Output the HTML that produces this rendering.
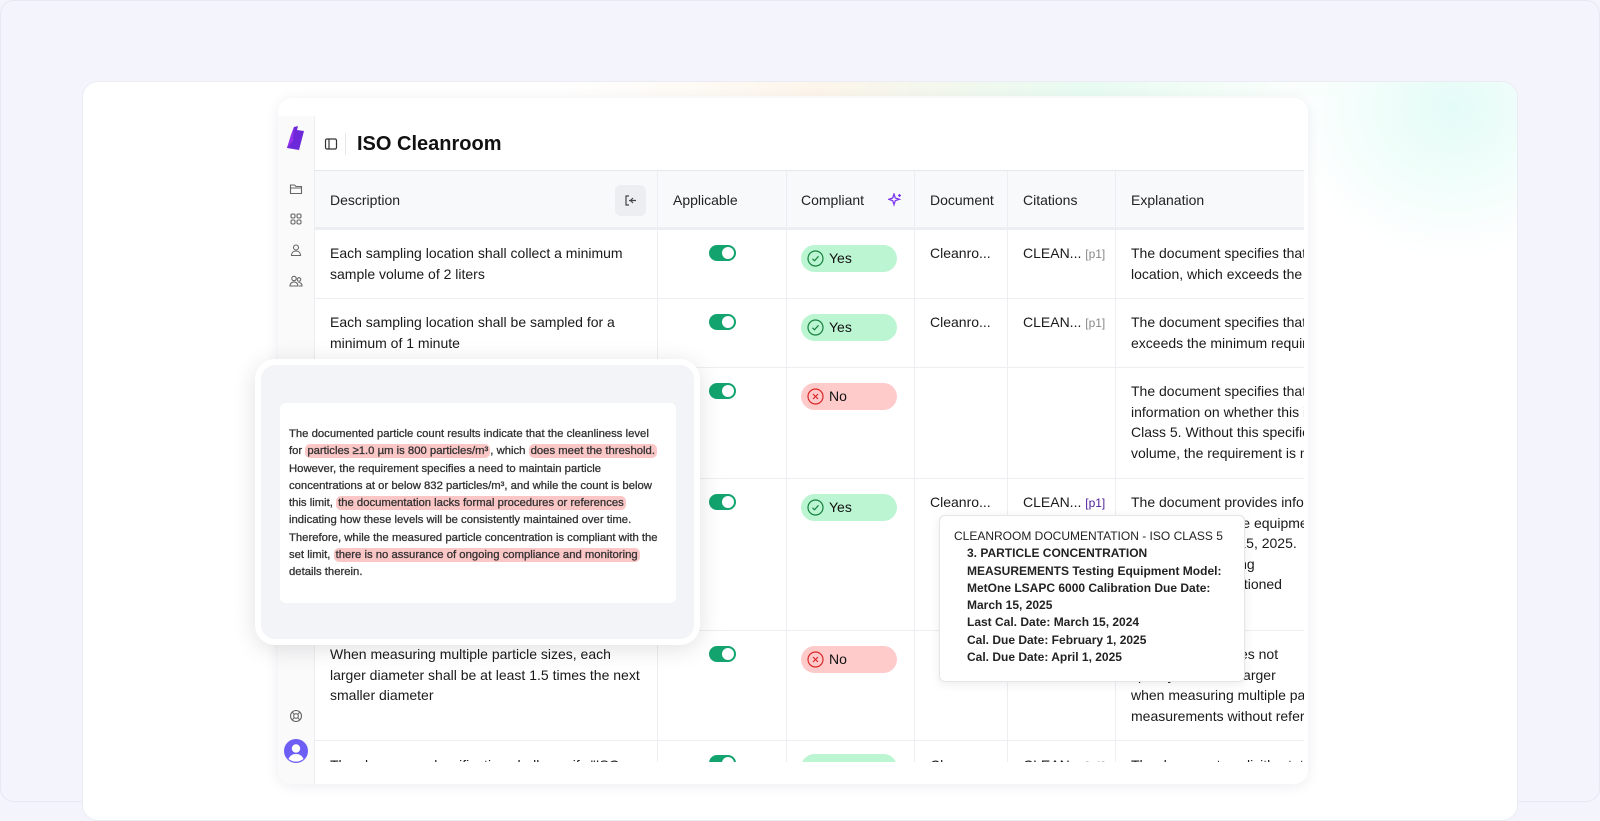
<!DOCTYPE html>
<html><head><meta charset="utf-8"><style>
*{box-sizing:border-box;margin:0;padding:0}
body{width:1600px;height:802px;overflow:hidden;background:#f4f4fc;font-family:"Liberation Sans",sans-serif;color:#1a1a1a;position:relative}
.frame{position:absolute;left:0;top:0;width:1600px;height:802px;border:1px solid #e8e8f3;border-radius:14px}
.card{position:absolute;left:82px;top:81px;width:1436px;height:740px;background:#fff;border-radius:16px;border:1px solid #ebebf3;overflow:hidden}
.glow{position:absolute;left:1190px;top:-140px;width:360px;height:330px;background:radial-gradient(ellipse at center,rgba(205,250,240,.55),rgba(255,255,255,0) 65%)}
.line{position:absolute;left:470px;top:0;width:800px;height:14px;background:linear-gradient(90deg,rgba(255,255,255,0),rgba(250,235,215,.5),rgba(215,248,232,.6),rgba(255,255,255,0))}
.app{position:absolute;left:278px;top:98px;width:1030px;height:686px;background:#fff;border-radius:14px;box-shadow:0 2px 14px rgba(30,30,80,.08);overflow:hidden}
.side{position:absolute;left:0;top:18px;width:37px;height:668px;background:#fafafb;border-right:1px solid #eceef1}
.side svg{position:absolute;left:11px}
.title{position:absolute;left:79px;top:35px;font-size:20px;font-weight:700;color:#111}
.tbl{position:absolute;left:37px;top:72px;width:989px;height:592px;overflow:hidden;border-top:1px solid #e6e8ec}
.hdr{position:absolute;left:0;top:0;height:59px;width:1100px;background:#f8f9fb;border-bottom:3px solid #eceef1}
.col{position:absolute;top:0;height:100%;border-right:1px solid #eceef1}
.h{position:absolute;top:21px;font-size:14px;color:#222}
.row{position:absolute;left:0;width:1100px;border-bottom:1px solid #eceef1}
.t{position:absolute;font-size:14px;line-height:20.5px;color:#1a1a1a;white-space:nowrap}
.tog{position:absolute;width:27px;height:16px;border-radius:8px;background:#12a36e}
.tog:after{content:"";position:absolute;right:2px;top:2px;width:12px;height:12px;border-radius:50%;background:#fff}
.pill{position:absolute;width:96px;height:27px;border-radius:14px;font-size:14px;line-height:27px;padding-left:28px}
.yes{background:#bbf5d2;color:#111}.no{background:#fecaca;color:#111}
.pill svg{position:absolute;left:6px;top:5px}
.p1{color:#888;font-size:12px}
.pop{position:absolute;left:255px;top:359px;width:445px;height:286px;border-radius:20px;background:#f3f4f7;border:6px solid #fff;box-shadow:0 4px 24px rgba(0,0,0,.12)}
.popin{position:absolute;left:19px;top:38px;width:396px;height:200px;background:#fff;border-radius:6px;padding:23px 0 0 9px;font-size:11.3px;line-height:17.3px;color:#333;font-weight:500;-webkit-text-stroke:.3px #333}
.hl{background:#fbc6c6;border-radius:5px;padding:1px 2px}
.tip{position:absolute;left:939px;top:515px;width:306px;height:167px;background:#fff;border:1px solid #e3e5e9;border-radius:6px;box-shadow:0 2px 10px rgba(0,0,0,.08);padding:12px 0 0 14px;font-size:12px;line-height:17.3px;color:#222}
.tip b{display:block;padding-left:13px}
</style></head><body>
<div class="frame"></div>
<div class="card"><div class="glow"></div><div class="line"></div></div>
<div class="app">
 <div class="side">
  <svg style="left:6px;top:10px" width="24" height="26" viewBox="0 0 24 26"><path d="M10 1 L14 0 L13 4 L20 5 L15 24 L3 22 L7 9 Z" fill="#6d28d9"/><path d="M3 22 L7 9 L10 1 L9 15 Z" fill="#9333ea"/></svg>
  <svg style="top:66px" width="14" height="14" viewBox="0 0 14 14" fill="none" stroke="#666" stroke-width="1.1"><path d="M1.5 3 h4 l1.5 1.5 h5.5 v7 h-11 z M1.5 6 h11"/></svg>
  <svg style="top:96px" width="14" height="14" viewBox="0 0 14 14" fill="none" stroke="#666" stroke-width="1.1"><rect x="2" y="2" width="4" height="4" rx="1.5"/><rect x="8" y="2" width="4" height="4" rx="1.5"/><rect x="2" y="8" width="4" height="4" rx="1.5"/><rect x="8" y="8" width="4" height="4" rx="1.5"/></svg>
  <svg style="top:127px" width="14" height="14" viewBox="0 0 14 14" fill="none" stroke="#666" stroke-width="1.1"><circle cx="7" cy="4.5" r="2.5"/><path d="M2.5 12.5 c0-3 2-4.5 4.5-4.5 s4.5 1.5 4.5 4.5 z"/></svg>
  <svg style="top:158px" width="14" height="14" viewBox="0 0 14 14" fill="none" stroke="#666" stroke-width="1.1"><circle cx="5" cy="4.5" r="2.2"/><circle cx="10" cy="5.5" r="1.8"/><path d="M1 12 c0-2.5 1.8-4 4-4 s4 1.5 4 4 z M9.5 8.5 c2 0 3.5 1 3.5 3.5 h-3"/></svg>
  <svg style="top:593px" width="14" height="14" viewBox="0 0 14 14" fill="none" stroke="#666" stroke-width="1.1"><circle cx="7" cy="7" r="5.5"/><circle cx="7" cy="7" r="2.3"/><path d="M3 3 l2.4 2.4 M11 3 l-2.4 2.4 M3 11 l2.4-2.4 M11 11 l-2.4-2.4"/></svg>
  <svg style="left:6px;top:623px" width="24" height="24" viewBox="0 0 24 24"><circle cx="12" cy="12" r="12" fill="#6d5ef5"/><circle cx="12" cy="9.5" r="4.2" fill="#fff"/><path d="M4.5 20 c1.5-3.5 4-5 7.5-5 s6 1.5 7.5 5 a12 12 0 0 1-15 0z" fill="#fff"/></svg>
 </div>
 <svg style="position:absolute;left:46px;top:39px" width="14" height="14" viewBox="0 0 14 14" fill="none" stroke="#333" stroke-width="1.2"><rect x="1.5" y="2" width="11" height="10" rx="1.5"/><path d="M5 2 v10"/></svg>
 <div style="position:absolute;left:67px;top:35px;width:1px;height:22px;background:#e5e7eb"></div>
 <div class="title">ISO Cleanroom</div>
 <div class="tbl">
  <div class="hdr">
   <div class="h" style="left:15px">Description</div>
   <div style="position:absolute;left:300px;top:14px;width:31px;height:31px;border-radius:6px;background:#eceef1"></div>
   <svg style="position:absolute;left:309px;top:23px" width="13" height="13" viewBox="0 0 13 13" fill="none" stroke="#444" stroke-width="1.2"><path d="M5 2 h-3 v9 h3 M5 6.5 h7 M9 4 l-2.5 2.5 L9 9"/></svg>
   <div class="h" style="left:358px">Applicable</div>
   <div class="h" style="left:486px">Compliant</div>
   <svg style="position:absolute;left:573px;top:22px" width="14" height="14" viewBox="0 0 14 14" fill="none" stroke="#7c3aed" stroke-width="1.3"><path d="M6 1 l1.3 4 l4 1.3 l-4 1.3 l-1.3 4 l-1.3-4 l-4-1.3 l4-1.3 z M11.5 1 v3 M10 2.5 h3"/></svg>
   <div class="h" style="left:615px">Document</div>
   <div class="h" style="left:708px">Citations</div>
   <div class="h" style="left:816px">Explanation</div>
  </div>
  <div class="col" style="left:342px;top:0;height:600px"></div>
  <div class="col" style="left:471px;top:0;height:600px"></div>
  <div class="col" style="left:599px;top:0;height:600px"></div>
  <div class="col" style="left:692px;top:0;height:600px"></div>
  <div class="col" style="left:800px;top:0;height:600px"></div>

  <div class="row" style="top:59px;height:69px">
   <div class="t" style="left:15px;top:13px">Each sampling location shall collect a minimum<br>sample volume of 2 liters</div>
   <div class="tog" style="left:394px;top:15px"></div>
   <div class="pill yes" style="left:486px;top:15px"><svg width="17" height="17" viewBox="0 0 17 17" fill="none" stroke="#15803d" stroke-width="1.2"><circle cx="8.5" cy="8.5" r="7.5"/><path d="M5.5 8.8 l2 2 l4-4.5"/></svg>Yes</div>
   <div class="t" style="left:615px;top:13px">Cleanro...</div>
   <div class="t" style="left:708px;top:13px">CLEAN... <span class="p1">[p1]</span></div>
   <div class="t" style="left:816px;top:13px">The document specifies that each sampling<br>location, which exceeds the minimum</div>
  </div>
  <div class="row" style="top:128px;height:69px">
   <div class="t" style="left:15px;top:13px">Each sampling location shall be sampled for a<br>minimum of 1 minute</div>
   <div class="tog" style="left:394px;top:15px"></div>
   <div class="pill yes" style="left:486px;top:15px"><svg width="17" height="17" viewBox="0 0 17 17" fill="none" stroke="#15803d" stroke-width="1.2"><circle cx="8.5" cy="8.5" r="7.5"/><path d="M5.5 8.8 l2 2 l4-4.5"/></svg>Yes</div>
   <div class="t" style="left:615px;top:13px">Cleanro...</div>
   <div class="t" style="left:708px;top:13px">CLEAN... <span class="p1">[p1]</span></div>
   <div class="t" style="left:816px;top:13px">The document specifies that sampling<br>exceeds the minimum requirement</div>
  </div>
  <div class="row" style="top:197px;height:111px">
   <div class="tog" style="left:394px;top:15px"></div>
   <div class="pill no" style="left:486px;top:15px"><svg width="17" height="17" viewBox="0 0 17 17" fill="none" stroke="#dc2626" stroke-width="1.2"><circle cx="8.5" cy="8.5" r="7.5"/><path d="M6 6 l5 5 M11 6 l-5 5"/></svg>No</div>
   <div class="t" style="left:816px;top:13px">The document specifies that the<br>information on whether this is<br>Class 5. Without this specification<br>volume, the requirement is not met</div>
  </div>
  <div class="row" style="top:308px;height:152px">
   <div class="tog" style="left:394px;top:15px"></div>
   <div class="pill yes" style="left:486px;top:15px"><svg width="17" height="17" viewBox="0 0 17 17" fill="none" stroke="#15803d" stroke-width="1.2"><circle cx="8.5" cy="8.5" r="7.5"/><path d="M5.5 8.8 l2 2 l4-4.5"/></svg>Yes</div>
   <div class="t" style="left:615px;top:13px">Cleanro...</div>
   <div class="t" style="left:708px;top:13px">CLEAN... <span class="p1" style="color:#4c1d95">[p1]</span></div>
   <div class="t" style="left:816px;top:13px">The document provides information<br>concerning that the equipment was<br>calibrated March 15, 2025.<br>Humidity monitoring<br>requirements mentioned</div>
  </div>
  <div class="row" style="top:460px;height:110px">
   <div class="t" style="left:15px;top:13px">When measuring multiple particle sizes, each<br>larger diameter shall be at least 1.5 times the next<br>smaller diameter</div>
   <div class="tog" style="left:394px;top:15px"></div>
   <div class="pill no" style="left:486px;top:15px"><svg width="17" height="17" viewBox="0 0 17 17" fill="none" stroke="#dc2626" stroke-width="1.2"><circle cx="8.5" cy="8.5" r="7.5"/><path d="M6 6 l5 5 M11 6 l-5 5"/></svg>No</div>
   <div class="t" style="left:816px;top:13px">The document does not<br>specify that each larger<br>when measuring multiple particle<br>measurements without reference</div>
  </div>
  <div class="row" style="top:570px;height:40px;border:0">
   <div class="t" style="left:15px;top:14px">The cleanroom classification shall specify "ISO</div>
   <div class="tog" style="left:394px;top:14px"></div>
   <div class="pill yes" style="left:486px;top:13px"></div>
   <div class="t" style="left:615px;top:14px">Cleanro...</div>
   <div class="t" style="left:708px;top:14px">CLEAN... <span class="p1">[p1]</span></div>
   <div class="t" style="left:816px;top:14px">The document explicitly states</div>
  </div>
 </div>
</div>
<div class="pop"><div class="popin">The documented particle count results indicate that the cleanliness level<br>for <span class="hl">particles ≥1.0 µm is 800 particles/m³</span>, which <span class="hl">does meet the threshold.</span><br>However, the requirement specifies a need to maintain particle<br>concentrations at or below 832 particles/m³, and while the count is below<br>this limit, <span class="hl">the documentation lacks formal procedures or references</span><br>indicating how these levels will be consistently maintained over time.<br>Therefore, while the measured particle concentration is compliant with the<br>set limit, <span class="hl">there is no assurance of ongoing compliance and monitoring</span><br>details therein.</div></div>
<div class="tip">CLEANROOM DOCUMENTATION - ISO CLASS 5<b>3. PARTICLE CONCENTRATION<br>MEASUREMENTS Testing Equipment Model:<br>MetOne LSAPC 6000 Calibration Due Date:<br>March 15, 2025<br>Last Cal. Date: March 15, 2024<br>Cal. Due Date: February 1, 2025<br>Cal. Due Date: April 1, 2025</b></div>
</body></html>
